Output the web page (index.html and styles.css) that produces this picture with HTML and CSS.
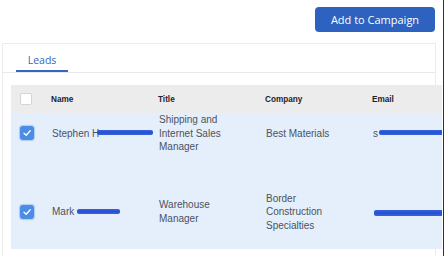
FILE: index.html
```html
<!DOCTYPE html>
<html>
<head>
<meta charset="utf-8">
<link rel="stylesheet" href="styles.css">
</head>
<body>
<div class="frame">
  <div class="topbar">
    <button class="btn-primary">Add to Campaign</button>
  </div>
  <div class="card">
    <div class="tabs">
      <div class="tab active">Leads</div>
    </div>
    <div class="table">
      <div class="thead row-grid">
        <div class="cell cb-cell"><span class="checkbox"></span></div>
        <div class="cell">Name</div>
        <div class="cell">Title</div>
        <div class="cell">Company</div>
        <div class="cell">Email</div>
      </div>
      <div class="tbody">
        <div class="trow row-grid first">
          <div class="cell cb-cell"><span class="checkbox checked"><svg viewBox="0 0 14 14" width="14" height="14"><path d="M4 7.2 L6.2 9.3 L10.2 4.8" fill="none" stroke="#fff" stroke-width="1.3" stroke-linecap="round" stroke-linejoin="round"/></svg></span></div>
          <div class="cell nowrap">Stephen H<span class="redact r-name1"></span></div>
          <div class="cell">Shipping and<br>Internet Sales<br>Manager</div>
          <div class="cell">Best Materials</div>
          <div class="cell nowrap clip">s<span class="redact r-mail1"></span></div>
        </div>
        <div class="trow row-grid second">
          <div class="cell cb-cell"><span class="checkbox checked"><svg viewBox="0 0 14 14" width="14" height="14"><path d="M4 7.2 L6.2 9.3 L10.2 4.8" fill="none" stroke="#fff" stroke-width="1.3" stroke-linecap="round" stroke-linejoin="round"/></svg></span></div>
          <div class="cell nowrap">Mark <span class="redact r-name2"></span></div>
          <div class="cell">Warehouse<br>Manager</div>
          <div class="cell">Border<br>Construction<br>Specialties</div>
          <div class="cell nowrap clip"><span class="redact r-mail2"></span></div>
        </div>
      </div>
    </div>
  </div>
</div>
</body>
</html>
```
FILE: styles.css
```css
* { box-sizing: border-box; }
html, body { margin: 0; padding: 0; background: #fff; }
body { font-family: "Liberation Sans", Arial, sans-serif; width: 446px; height: 256px; overflow: hidden; }

.frame {
  width: 444px;
  height: 256px;
  border-right: 1px solid #27324a;
  overflow: hidden;
}

.topbar {
  height: 43px;
  display: flex;
  justify-content: flex-end;
  align-items: flex-start;
  padding: 7px 8px 0 0;
}

.btn-primary {
  width: 120px;
  height: 25px;
  border: none;
  border-radius: 4px;
  background: #2d62c0;
  color: #fff;
  font-family: "Open Sans", sans-serif;
  font-weight: 500;
  font-size: 11px;
  padding: 0;
  cursor: pointer;
}

.card {
  margin-left: 2px;
  width: 434px;
  height: 213px;
  border: 1px solid #ececec;
  border-bottom: none;
  padding-left: 8px;
}

.tabs {
  display: flex;
  margin-left: -8px;
  padding-left: 13px;
  border-bottom: 1px solid #e9e9e9;
  height: 29px;
}

.tab {
  width: 52px;
  height: 28px;
  padding-top: 9px;
  text-align: center;
  font-family: "Open Sans", sans-serif;
  font-size: 10.5px;
  font-weight: 500;
  line-height: 14px;
  color: #3566c2;
}
.tab.active { border-bottom: 2px solid #3566c2; }

.table {
  width: 431px;
  margin-top: 12px;
}

.row-grid {
  display: grid;
  grid-template-columns: 40px 107px 107px 107px 70px;
  align-items: center;
}

.thead {
  height: 28px;
  background: #ececec;
  font-weight: bold;
  font-size: 8.2px;
  color: #1e222b;
}

.cb-cell { padding-left: 9px; display: flex; align-items: center; }

.checkbox {
  display: inline-block;
  width: 12px;
  height: 12px;
  background: #fff;
  border: 1px solid #d2d5da;
  border-radius: 2px;
}
.checkbox.checked {
  width: 14px;
  height: 14px;
  border: none;
  border-radius: 3px;
  background: #4a8de6;
  box-shadow: 0 0 1px 1px rgba(74,141,230,0.35);
}
.checkbox svg { display: block; }

.tbody {
  height: 137px;
  overflow: hidden;
}

.trow {
  background: #e4effb;
  font-size: 10px;
  line-height: 13.5px;
  color: #4c525e;
}
.trow .cell { padding-left: 1px; }
.trow .cb-cell { padding-left: 9px; }
.trow.first { margin-top: -20px; padding: 20px 0 22px; }
.trow.second { padding: 16px 0 17px; }

.nowrap { white-space: nowrap; }
.clip { overflow: hidden; }

.redact {
  display: inline-block;
  height: 5px;
  background: linear-gradient(180deg, #3a62dc 0%, #2450d2 50%, #3a62dc 100%);
  border-radius: 2px;
  vertical-align: middle;
  position: relative;
  top: -1px;
}
.r-name1 { width: 56px; margin-left: -2px; }
.r-mail1 { width: 70px; margin-left: 1px; }
.r-name2 { width: 43px; height: 5px; }
.r-mail2 { width: 72px; height: 6px; margin-left: 1px; top: 1px; }
```
